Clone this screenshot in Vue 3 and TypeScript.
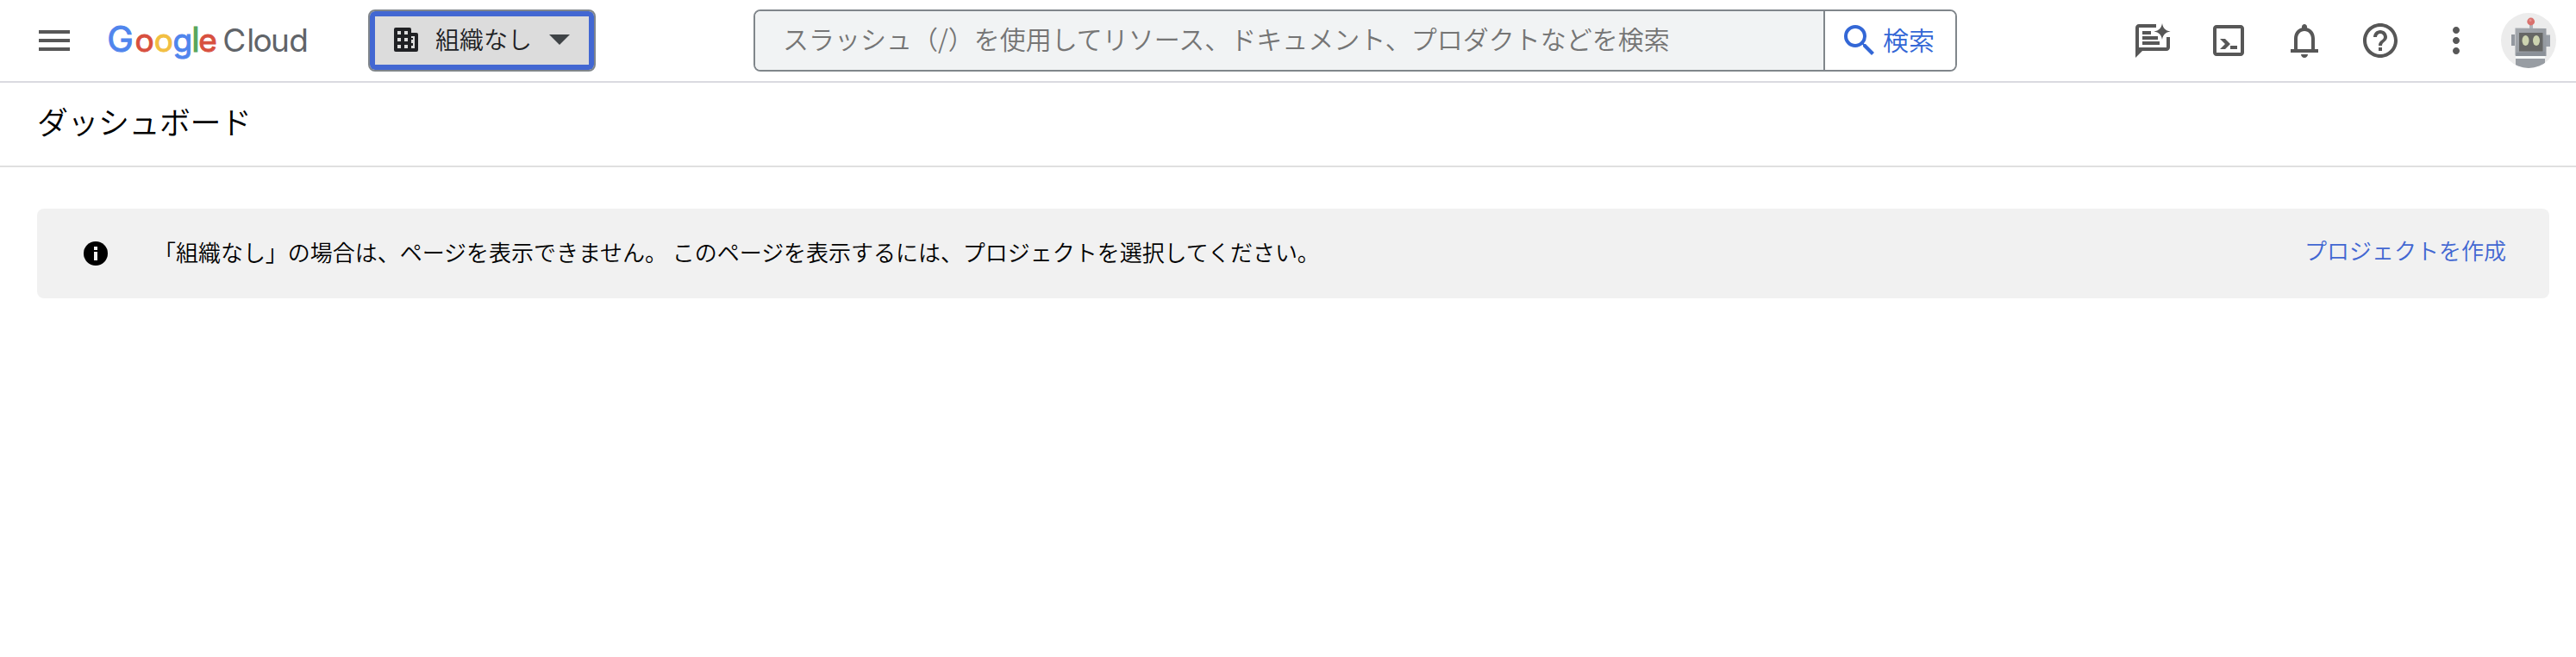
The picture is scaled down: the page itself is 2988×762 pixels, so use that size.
<script setup lang="ts">
interface LogoLetter {
  char: string
  x: number
  kind: string
}

const logoLetters: LogoLetter[] = [
  { char: 'G', x: 0.3, kind: 'g-blue capital' },
  { char: 'o', x: 32.5, kind: 'g-red' },
  { char: 'o', x: 54.8, kind: 'g-yellow' },
  { char: 'g', x: 76.6, kind: 'g-blue' },
  { char: 'l', x: 98.2, kind: 'g-green tall' },
  { char: 'e', x: 106.2, kind: 'g-red' },
  { char: 'C', x: 134.3, kind: 'cloud' },
  { char: 'l', x: 162.3, kind: 'cloud' },
  { char: 'o', x: 169.5, kind: 'cloud' },
  { char: 'u', x: 190, kind: 'cloud' },
  { char: 'd', x: 211.2, kind: 'cloud' },
]

const actions: { label: string; path: string }[] = [
  {
    label: 'Gemini',
    path: 'M14 2.5H4c-1.1 0-2 .9-2 2V22l4-4h14c1.1 0 2-.9 2-2v-6h-2v6H4V4.500h10zM6 6.500h5v2H6zm0 3h9v2H6zm0 3h10v2H6zM17.500 2c.5 3 1.800 4.200 4.800 4.800-3 .5-4.300 1.800-4.800 4.700-.5-2.900-1.800-4.200-4.800-4.700 3-.6 4.300-1.800 4.800-4.800z',
  },
  {
    label: 'Cloud Shell',
    path: 'M19 3H5c-1.100 0-2 .9-2 2v14c0 1.100.9 2 2 2h14c1.100 0 2-.9 2-2V5c0-1.100-.9-2-2-2zm0 16H5V5h14zM7 11h3l3 3-3 3H7l3-3zm6 4h4v2h-4z',
  },
  {
    label: '通知',
    path: 'M18 17v-6c0-3.070-1.630-5.640-4.500-6.320V4c0-.83-.67-1.500-1.500-1.500s-1.500.67-1.500 1.500v.68C7.640 5.360 6 7.920 6 11v6H4v2h16v-2zm-2 0H8v-6c0-2.480 1.510-4.500 4-4.500s4 2.020 4 4.500zM12 22c1.100 0 2-.9 2-2h-4c0 1.100.9 2 2 2z',
  },
  {
    label: 'ヘルプ',
    path: 'M11 18h2v-2h-2zm1-16C6.480 2 2 6.480 2 12s4.480 10 10 10 10-4.480 10-10S17.520 2 12 2zm0 18c-4.410 0-8-3.590-8-8s3.590-8 8-8 8 3.590 8 8-3.590 8-8 8zm0-14c-2.210 0-4 1.790-4 4h2c0-1.100.9-2 2-2s2 .9 2 2c0 2-3 1.750-3 5h2c0-2.250 3-2.500 3-5 0-2.210-1.790-4-4-4z',
  },
  {
    label: 'その他',
    path: 'M12 8c1.100 0 2-.9 2-2s-.9-2-2-2-2 .9-2 2 .9 2 2 2zm0 2c-1.100 0-2 .9-2 2s.9 2 2 2 2-.9 2-2-.9-2-2-2zm0 6c-1.100 0-2 .9-2 2s.9 2 2 2 2-.9 2-2-.9-2-2-2z',
  },
]
</script>

<template>
  <div class="page">
    <header class="topbar">
      <svg class="icon menu" viewBox="0 0 24 24"><path d="M3 18h18v-2H3zm0-5h18v-2H3zm0-7v2h18V6z" /></svg>
      <svg class="logo" width="236" height="60" viewBox="0 0 236 60">
        <text v-for="(l, i) in logoLetters" :key="i" :x="l.x" y="42.500" :class="l.kind">{{ l.char }}</text>
      </svg>

      <button class="selector" type="button">
        <svg class="building" width="28" height="28" viewBox="0 0 28 28">
          <path
            fill-rule="evenodd"
            d="M2 0H18a2 2 0 0 1 2 2V6H26a2 2 0 0 1 2 2V26a2 2 0 0 1-2 2H2a2 2 0 0 1-2-2V2a2 2 0 0 1 2-2zM4 4v4h4V4zm8 0v4h4V4zM4 12v4h4v-4zm8 0v4h4v-4zM4 20v4h4v-4zm8 0v4h4v-4zM20 10v2h2v2h-2v4h2v3h-2v3h4V10z"
          />
        </svg>
        <span class="selector-text">組織なし</span>
        <svg class="caret" width="24" height="12" viewBox="0 0 24 12"><path d="M0 0H24L12 12z" /></svg>
      </button>

      <div class="search">
        <div class="search-field">スラッシュ（/）を使用してリソース、ドキュメント、プロダクトなどを検索</div>
        <button class="search-button" type="button">
          <svg class="icon" viewBox="0 0 24 24">
            <path d="M15.500 14h-.79l-.28-.27A6.471 6.471 0 0 0 16 9.500 6.500 6.500 0 1 0 9.500 16c1.610 0 3.090-.59 4.230-1.570l.27.28v.79l5 4.990L20.490 19zm-6 0C7.010 14 5 11.990 5 9.500S7.010 5 9.500 5 14 7.010 14 9.500 11.990 14 9.500 14z" />
          </svg>
          <span>検索</span>
        </button>
      </div>

      <nav class="actions">
        <svg v-for="a in actions" :key="a.label" class="icon" viewBox="0 0 24 24" :aria-label="a.label">
          <path :d="a.path" fill-rule="evenodd" />
        </svg>
        <svg class="avatar" width="64" height="64" viewBox="0 0 64 64">
          <defs>
            <clipPath id="avatar-clip"><circle cx="32" cy="32" r="32" /></clipPath>
            <linearGradient id="metal" x1="0" y1="0" x2="1" y2="1">
              <stop offset="0" stop-color="#a5a9ae" />
              <stop offset="1" stop-color="#8f949b" />
            </linearGradient>
          </defs>
          <g clip-path="url(#avatar-clip)">
            <rect width="64" height="64" fill="#ececec" />
            <rect x="33" y="12" width="4" height="8" fill="#aeb3ba" />
            <circle cx="34.700" cy="10" r="4.400" fill="#d9716d" />
            <circle cx="34" cy="8.500" r="1.500" fill="#e59390" />
            <rect x="12" y="25" width="4" height="13" fill="#93989f" />
            <rect x="51" y="25.500" width="6" height="13.500" fill="#9a9fa7" />
            <path d="M16.500 17.500L52.500 18V50L16.500 49.500z" fill="url(#metal)" />
            <path d="M21 23H48.500V44.500H21z" fill="#666765" />
            <path d="M18 46L51 45V50H17z" fill="#8b9198" />
            <ellipse cx="28.500" cy="32" rx="4" ry="6" fill="#cdd4b0" />
            <ellipse cx="41" cy="32" rx="4" ry="6" fill="#cdd4b0" />
            <rect x="17" y="50" width="34" height="3" fill="#f6f8f8" />
            <path d="M17 53H51V64H17z" fill="#989da3" />
          </g>
        </svg>
      </nav>
    </header>

    <div class="titlebar"><h1>ダッシュボード</h1></div>

    <main>
      <section class="banner">
        <svg class="info" width="28" height="28" viewBox="0 0 28 28">
          <circle cx="14" cy="14" r="14" />
          <path d="M12 6h4v4h-4zM12 12h4v10h-4z" fill="#f1f1f1" />
        </svg>
        <p>「組織なし」の場合は、ページを表示できません。 このページを表示するには、プロジェクトを選択してください。</p>
        <a class="create">プロジェクトを作成</a>
      </section>
    </main>
  </div>
</template>

<style>
body {
  margin: 0;
  background: #fff;
}
</style>

<style scoped>
.page {
  height: 762px;
  overflow: hidden;
  background: #fff;
  color: #000;
  font-family: "Noto Sans CJK JP", sans-serif;
  font-weight: 350;
}
.topbar {
  box-sizing: border-box;
  display: flex;
  align-items: center;
  height: 96px;
  padding: 0 23px 0 39px;
  border-bottom: 2px solid #dadae0;
}
.icon {
  flex: none;
  width: 48px;
  height: 48px;
  fill: #575757;
}
.logo {
  flex: none;
  margin-left: 37px;
  font-family: Inter, sans-serif;
}
.logo text {
  font-size: 37px;
  font-weight: 400;
  stroke-width: 1;
}
.logo text.capital { font-size: 41px; }
.logo text.tall { font-size: 39px; }
.logo .g-blue { fill: #5085ed; stroke: #5085ed; }
.logo .g-red { fill: #d8503f; stroke: #d8503f; }
.logo .g-yellow { fill: #f2bf42; stroke: #f2bf42; }
.logo .g-green { fill: #58a55c; stroke: #58a55c; }
.logo text.cloud {
  fill: #606469;
  font-size: 37px;
}
button {
  border: 0;
  margin: 0;
  font: inherit;
}
.selector {
  box-sizing: border-box;
  flex: none;
  display: flex;
  align-items: center;
  width: 264px;
  height: 72px;
  margin-left: 67px;
  padding: 0 0 2px 28px;
  border: 2px solid #80868b;
  border-radius: 8px;
  background: #dcdcdc;
  box-shadow: inset 0 0 0 6px #4267d2;
  color: #202124;
}
.building { fill: #202124; }
.selector-text {
  margin-left: 20px;
  padding-bottom: 3px;
  font-size: 28px;
  line-height: 40px;
}
.caret {
  margin-left: 20px;
  fill: #3f4346;
}
.search {
  box-sizing: border-box;
  flex: none;
  display: flex;
  width: 1396px;
  height: 72px;
  margin-left: 183px;
  border: 2px solid #80868b;
  border-radius: 8px;
  overflow: hidden;
}
.search-field {
  flex: 1;
  padding-left: 32px;
  background: #f1f3f4;
  color: #757575;
  font-size: 30px;
  line-height: 62px;
  white-space: nowrap;
}
.search-button {
  box-sizing: border-box;
  display: flex;
  align-items: center;
  width: 153px;
  padding: 0 0 0 16px;
  border-left: 2px solid #80868b;
  background: #fff;
  color: #3367d6;
  font-size: 30px;
}
.search-button .icon { fill: #3367d6; }
.search-button span {
  margin-left: 3px;
  padding-bottom: 4px;
  line-height: 60px;
  white-space: nowrap;
}
.actions {
  display: flex;
  align-items: center;
  gap: 40px;
  margin-left: auto;
}
.avatar { margin-left: -12px; }
.titlebar {
  box-sizing: border-box;
  height: 98px;
  padding-left: 43px;
  border-bottom: 2px solid #e0e0e0;
}
h1 {
  margin: 0;
  font-size: 36px;
  font-weight: 350;
  line-height: 88px;
  letter-spacing: -0.5px;
}
main { padding: 48px 31px 0 43px; }
.banner {
  box-sizing: border-box;
  display: flex;
  align-items: center;
  height: 104px;
  padding: 0 50px 0 54px;
  border-radius: 8px;
  background: #f1f1f1;
  font-size: 26px;
}
.banner p {
  margin: 0 auto 0 53px;
  padding-bottom: 4px;
  line-height: 40px;
  letter-spacing: -0.03px;
}
.create {
  color: #4267d2;
  line-height: 40px;
  padding-bottom: 8px;
}
</style>
